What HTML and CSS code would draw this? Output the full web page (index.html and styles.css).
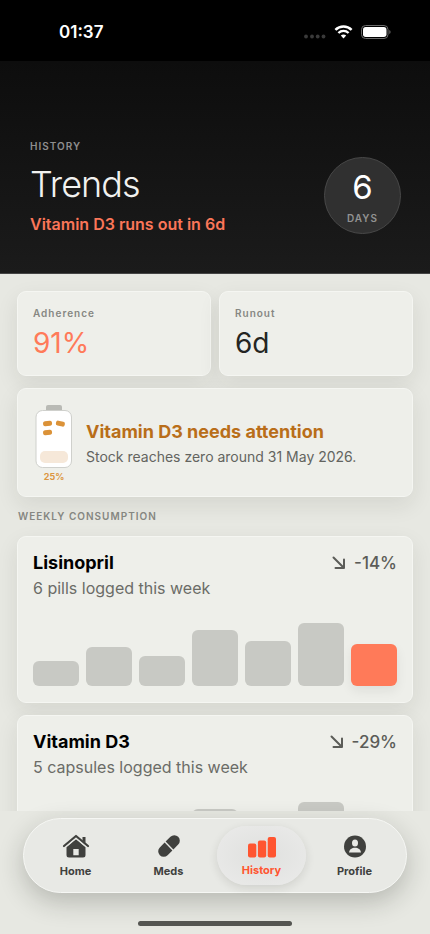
FILE: index.html
```html
<!DOCTYPE html>
<html lang="en">
<head>
<meta charset="utf-8">
<meta name="viewport" content="width=device-width, initial-scale=1">
<title>Trends</title>
<link rel="stylesheet" href="styles.css">
</head>
<body>
<div class="status">
  <time class="clock">01:37</time>
  <div class="indicators">
    <svg width="22" height="16" viewBox="0 0 22 16" fill="#3a3a3a"><circle cx="2" cy="12.500" r="1.900"/><circle cx="8" cy="12.500" r="1.900"/><circle cx="13.700" cy="12.500" r="1.900"/><circle cx="19.500" cy="12.500" r="1.900"/></svg>
    <svg width="19" height="14" viewBox="0 0 18 14" fill="none" stroke="#fff"><path d="M.9 4.900C5.500.400 12.500.400 17.100 4.900" stroke-width="2.500"/><path d="M3.900 8C6.800 5.200 11.200 5.200 14.100 8" stroke-width="2.400"/><path d="M6.300 10.600C7.900 9.200 10.100 9.200 11.700 10.600L9 13.400Z" fill="#fff" stroke="none"/></svg>
    <svg width="30" height="14" viewBox="0 0 30 14"><rect x=".5" y=".5" width="26.500" height="13" rx="4" fill="none" stroke="#6b6b6b"/><rect x="2" y="2" width="23.500" height="10" rx="2.700" fill="#fff"/><path d="M28.300 5v4c1.700-.6 1.700-3.400 0-4Z" fill="#6b6b6b"/></svg>
  </div>
</div>
<header class="hero">
  <div>
    <p class="eyebrow">HISTORY</p>
    <h1>Trends</h1>
    <p class="notice">Vitamin D3 runs out in 6d</p>
  </div>
  <div class="days"><strong>6</strong><span>DAYS</span></div>
</header>
<main>
  <section class="stats">
    <div class="card stat"><h2>Adherence</h2><p class="accent">91%</p></div>
    <div class="card stat"><h2>Runout</h2><p>6d</p></div>
  </section>
  <section class="card alert">
    <div class="bottle">
      <svg width="38" height="64" viewBox="0 0 38 64">
        <rect x="11" y="0" width="16" height="7" rx="2" fill="#b9bab5"/>
        <rect x="1" y="5.500" width="35.500" height="57" rx="6.500" fill="#fff" stroke="#cfd0cc"/>
        <rect x="5" y="46" width="28" height="12" rx="5" fill="#f6e8d9"/>
        <g fill="#db9238"><rect x="8" y="16" width="9" height="5" rx="2" transform="rotate(-6 12 18)"/><rect x="21" y="16" width="9" height="5" rx="2" transform="rotate(12 25 18)"/><rect x="8" y="25" width="9" height="5" rx="2" transform="rotate(-6 12 27)"/></g>
      </svg>
      <span>25%</span>
    </div>
    <div>
      <h2>Vitamin D3 needs attention</h2>
      <p>Stock reaches zero around 31 May 2026.</p>
    </div>
  </section>
  <h2 class="section-title">WEEKLY CONSUMPTION</h2>
  <article class="card med">
    <div class="med-head"><h3>Lisinopril</h3>
      <span class="trend"><svg width="14" height="14" viewBox="0 0 14 14"><path d="M1.500 1.500 12 12M12 3.500V12H3.500"/></svg>-14%</span></div>
    <p>6 pills logged this week</p>
    <div class="bars"><i style="height:25px"></i><i style="height:39px"></i><i style="height:30px"></i><i style="height:56px"></i><i style="height:45px"></i><i style="height:63px"></i><i class="today" style="height:42px"></i></div>
  </article>
  <article class="card med">
    <div class="med-head"><h3>Vitamin D3</h3>
      <span class="trend"><svg width="14" height="14" viewBox="0 0 14 14"><path d="M1.500 1.500 12 12M12 3.500V12H3.500"/></svg>-29%</span></div>
    <p>5 capsules logged this week</p>
    <div class="bars"><i style="height:30px"></i><i style="height:42px"></i><i style="height:25px"></i><i style="height:56px"></i><i style="height:39px"></i><i style="height:63px"></i><i class="today" style="height:36px"></i></div>
  </article>
</main>
<footer>
  <nav>
    <a href="#home"><svg width="28" height="26" viewBox="0 0 28 26"><path d="M2 13 14 3l12 10" fill="none" stroke="currentColor" stroke-width="2.200" stroke-linecap="round" stroke-linejoin="round"/><path d="M20.500 4h3v6l-3-2.500Z" fill="currentColor"/><path fill-rule="evenodd" d="m14 6.200 9.500 8V22q0 2.500-2.500 2.500H7Q4.500 24.500 4.500 22v-7.800ZM11.300 16v6.200h5.400V16Z" fill="currentColor"/><path d="M3.500 14.200 14 5.500l10.500 8.700" fill="none" stroke="#e8e9e5" stroke-width="1"/></svg>Home</a>
    <a href="#meds"><svg width="28" height="26" viewBox="0 0 28 26" fill="currentColor"><g transform="rotate(-45 14 13)"><path d="M13.300 7.500H6.500a5.500 5.500 0 0 0 0 11h6.800ZM14.700 7.500h6.800a5.500 5.500 0 0 1 0 11h-6.800Z"/></g></svg>Meds</a>
    <a href="#history" class="active" aria-current="page"><svg width="28" height="26" viewBox="0 0 28 26" fill="currentColor"><rect x="0" y="9.500" width="8.300" height="14" rx="2"/><rect x="9.900" y="6.500" width="8.300" height="17" rx="2"/><rect x="19.700" y="3" width="8.300" height="20.500" rx="2"/></svg>History</a>
    <a href="#profile"><svg width="28" height="26" viewBox="0 0 28 26"><circle cx="14" cy="13.500" r="11" fill="currentColor"/><ellipse cx="14" cy="10" rx="3" ry="3.600" fill="#e9eae6"/><path d="M8 19.500c.3-3.300 3-4.800 6-4.800s5.700 1.500 6 4.800Z" fill="#e9eae6"/></svg>Profile</a>
  </nav>
  <div class="home-indicator"></div>
</footer>
</body>
</html>
```
FILE: styles.css
```css
* { box-sizing: border-box; margin: 0; }

body {
  height: 100vh;
  display: flex;
  flex-direction: column;
  overflow: hidden;
  background: #e7e8e2;
  color: #242522;
  font-family: Inter, "Liberation Sans", sans-serif;
}

.status {
  flex: none;
  height: 61px;
  padding: 3px 39px 0 59px;
  display: flex;
  align-items: center;
  justify-content: space-between;
  background: #000;
  color: #fff;
}
.clock { font-size: 17px; font-weight: 600; }
.indicators { display: flex; align-items: center; gap: 8px; }

.hero {
  flex: none;
  padding: 78px 29px 39px 30px;
  display: flex;
  align-items: flex-end;
  justify-content: space-between;
  background: linear-gradient(#0d0d0d, #1b1b1b);
  border-bottom: 1px solid #444;
}
.eyebrow { font-size: 10px; line-height: 14px; font-weight: 600; letter-spacing: 1px; color: #8e8e8e; }
h1 { margin: 8px 0 7px; font-size: 36px; line-height: 46px; font-weight: 300; letter-spacing: -1px; color: #f1f1ef; }
.notice { font-size: 16px; line-height: 20px; font-weight: 600; color: #fb7659; }
.days {
  width: 77px;
  height: 77px;
  border-radius: 50%;
  border: 1px solid #484848;
  background: #303030;
  display: flex;
  flex-direction: column;
  align-items: center;
  justify-content: center;
  gap: 4px;
}
.days strong { font-size: 33px; line-height: 40px; font-weight: 400; color: #fff; }
.days span { font-size: 10px; line-height: 14px; font-weight: 600; letter-spacing: 1px; color: #929292; }

main {
  flex: 1;
  min-height: 0;
  overflow: hidden;
  padding: 17px 17px 0;
  display: flex;
  flex-direction: column;
  gap: 12px;
}
.card {
  flex: none;
  border: 1px solid #f5f6f2;
  border-radius: 9px;
  background: #eeefea;
  box-shadow: 0 8px 22px rgba(30, 32, 25, 0.09);
}
.stats { display: grid; grid-template-columns: 1fr 1fr; gap: 8px; }
.stat { padding: 14px 15px 15px; }
.stat h2 { font-size: 10px; line-height: 14px; font-weight: 600; letter-spacing: 1px; color: #868782; }
.stat p { margin-top: 6px; font-size: 28px; line-height: 34px; }
.stat .accent { color: #ff7a59; }

.alert { padding: 16px 17px 13px; display: flex; align-items: center; gap: 13px; }
.bottle { display: flex; flex-direction: column; align-items: center; gap: 2px; }
.bottle span { font-size: 9px; line-height: 12px; font-weight: 700; color: #dc9641; }
.alert h2 { font-size: 18px; line-height: 24px; font-weight: 700; color: #b96e19; }
.alert p { margin-top: 2px; font-size: 14px; line-height: 22px; color: #63645f; }

.section-title { margin: 1px; font-size: 10px; line-height: 13px; font-weight: 600; letter-spacing: 1px; color: #858681; }

.med { padding: 14px 15px 16px; }
.med-head { display: flex; align-items: center; justify-content: space-between; }
h3 { font-size: 18px; line-height: 24px; font-weight: 700; color: #000; }
.trend { display: flex; align-items: center; gap: 8px; font-size: 17px; line-height: 24px; font-weight: 500; color: #5b5c58; }
.trend svg { fill: none; stroke: currentColor; stroke-width: 2; stroke-linecap: round; stroke-linejoin: round; }
.med p { margin-top: 2px; font-size: 16px; line-height: 22px; color: #6b6c67; }
.bars { height: 63px; margin-top: 24px; display: flex; align-items: flex-end; gap: 7px; }
.bars i { flex: 1; border-radius: 6px; background: #c8c9c4; }
.bars .today { background: #ff7a59; box-shadow: 0 5px 12px rgba(30, 32, 25, 0.07); }

footer { flex: none; padding: 7px 23px 8px; background: #e7e8e2; }
nav {
  height: 75px;
  padding: 7px;
  display: grid;
  grid-template-columns: repeat(4, 1fr);
  gap: 4px;
  border: 1px solid #f6f7f4;
  border-radius: 38px;
  background: #e8e9e5;
  box-shadow: 0 9px 26px rgba(30, 32, 25, 0.24);
}
nav a {
  display: flex;
  flex-direction: column;
  align-items: center;
  justify-content: center;
  gap: 4px;
  border-radius: 30px;
  color: #40413e;
  font-size: 11px;
  line-height: 16px;
  font-weight: 700;
  text-decoration: none;
}
nav .active { gap: 2px; color: #ff5530; background: radial-gradient(#dfe0de, #ebebea); box-shadow: 0 3px 10px rgba(30, 32, 25, 0.12); }
.home-indicator { width: 154px; height: 5px; margin: 28px auto 0; border-radius: 3px; background: #555652; }
```
